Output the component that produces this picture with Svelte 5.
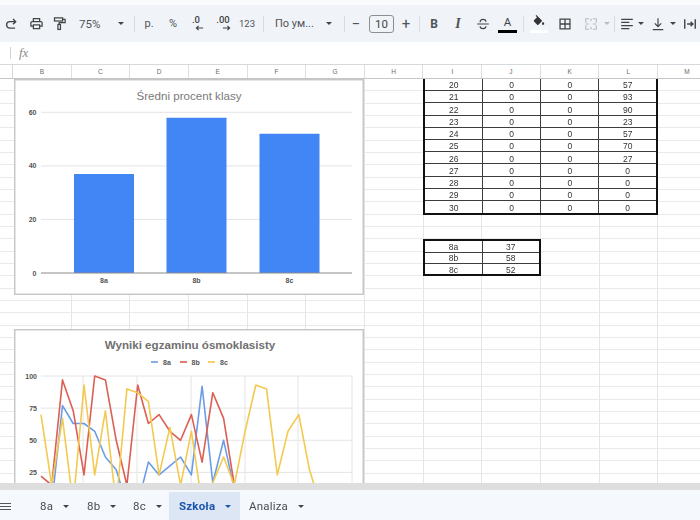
<script>
  const columns = ['B','C','D','E','F','G','H','I','J','K','L','M'];
  const table1 = [[20,0,0,57],[21,0,0,93],[22,0,0,90],[23,0,0,23],[24,0,0,57],[25,0,0,70],[26,0,0,27],[27,0,0,0],[28,0,0,0],[29,0,0,0],[30,0,0,0]];
  const table2 = [['8a',37],['8b',58],['8c',52]];
  const bars = [{l:'8a',x:74,v:37},{l:'8b',x:166.5,v:58},{l:'8c',x:259.5,v:52}];
  const barY = (v) => 273 - v * (273 - 112.3) / 60;
  const lineX = (i) => 41 + i * 10.74;
  const lineY = (v) => 504.5 - v * 1.285;
  const pts = (d) => d.map((v, i) => `${lineX(i).toFixed(1)},${lineY(v).toFixed(1)}`).join(' ');
  const blue = [10,0,77,63,63,57,37,27,0,0,33,23,30,37,23,92,17,50,12,0,0];
  const red = [22,15,97,73,23,100,97,50,15,93,63,70,57,50,70,33,87,67,15,0,0];
  const yellow = [70,15,67,0,93,23,73,0,90,87,80,23,60,15,57,0,17,37,15,57,93,90,23,57,70,27,0,0];
  const tabs = [{n:'8a',c:'ta'},{n:'8b',c:'tb'},{n:'8c',c:'tc8'},{n:'Szkoła',c:'active'},{n:'Analiza',c:'tz'}];
</script>

<div class="app">
  <div class="topline"></div>
  <div class="toolbar">
    <span class="i w22"><svg class="ic" viewBox="0 0 24 24"><path d="M19 19H10a5.500 5.500 0 0 1 0-11h10M15.500 3.500 20 8l-4.500 4.500" fill="none" stroke="#444" stroke-width="2.400"/></svg></span>
    <span class="i w28"><svg class="ic lg" viewBox="0 0 24 24"><path fill="#444" d="M19 8h-1V3H6v5H5c-1.660 0-3 1.340-3 3v6h4v4h12v-4h4v-6c0-1.660-1.340-3-3-3zM8 5h8v3H8V5zm8 14H8v-4h8v4zm4-4h-2v-2H6v2H4v-4c0-.550.450-1 1-1h14c.550 0 1 .450 1 1v4z"/></svg></span>
    <span class="i w18"><svg class="ic lg" viewBox="0 0 24 24"><g fill="none" stroke="#444" stroke-width="2"><rect x="4" y="3" width="13" height="5"/><path d="M17 5.500h4v5H11.500v3"/><rect x="9.500" y="13.500" width="4" height="8"/></g></svg></span>
    <span class="t zoom">75%</span>
    <span class="caret c18"></span>
    <span class="sep m4"></span>
    <span class="t w28">р.</span>
    <span class="t w20">%</span>
    <span class="i w26 dec"><span class="dect">.0</span><svg class="arrow" viewBox="0 0 10 6"><path d="M9 3H2M4 .8 1.500 3 4 5.200" fill="none" stroke="#444" stroke-width="1.200"/></svg></span>
    <span class="i w28 dec"><span class="dect">.00</span><svg class="arrow" viewBox="0 0 10 6"><path d="M1 3h7M6 .8 8.500 3 6 5.200" fill="none" stroke="#444" stroke-width="1.200"/></svg></span>
    <span class="t w20 small">123</span>
    <span class="sep m6"></span>
    <span class="t font">По ум...</span>
    <span class="caret c16"></span>
    <span class="sep m7"></span>
    <span class="t w22 op">−</span>
    <span class="size">10</span>
    <span class="t w24 op">+</span>
    <span class="sep m1"></span>
    <span class="t w28 bold">B</span>
    <span class="t w20 ital">I</span>
    <span class="i w30"><svg class="ic" viewBox="0 0 24 24"><path d="M2 12h20M7 9c0-3 2-5 5-5s5 1.500 5 4M7 16c0 2.500 2 4 5 4s5-1.500 5-4" fill="none" stroke="#444" stroke-width="2"/></svg></span>
    <span class="colora"><span>A</span><i></i></span>
    <span class="sep m6"></span>
    <span class="fill"><svg class="ic" viewBox="0 0 24 24"><path fill="#333" d="M16.560 8.940 7.620 0 6.210 1.410l2.380 2.380-5.150 5.150c-.590.590-.590 1.540 0 2.120l5.500 5.500c.290.290.680.440 1.060.440s.770-.150 1.060-.440l5.500-5.500c.590-.580.590-1.530 0-2.120zM19 11.500s-2 2.170-2 3.500c0 1.100.900 2 2 2s2-.900 2-2c0-1.330-2-3.500-2-3.500z"/></svg><i></i></span>
    <span class="i w34"><svg class="ic" viewBox="0 0 24 24"><path d="M3.500 3.500h17v17h-17zM12 3.500v17M3.500 12h17" fill="none" stroke="#444" stroke-width="2.200"/></svg></span>
    <span class="i w18"><svg class="ic" viewBox="0 0 24 24"><path d="M3 10V3h6M15 3h6v7M3 14v7h6M15 21h6v-7M3 12h6M15 12h6M12 3v4M12 17v4" fill="none" stroke="#b9bdc2" stroke-width="2"/></svg></span>
    <span class="caret c14 light"></span>
    <span class="sep"></span>
    <span class="i w20 m2"><svg class="ic" viewBox="0 0 24 24"><path d="M2 4h20M2 9.300h14M2 14.600h20M2 20h14" fill="none" stroke="#444" stroke-width="2.200"/></svg></span>
    <span class="caret c8"></span>
    <span class="i w22 m2"><svg class="ic" viewBox="0 0 24 24"><path d="M12 2v14M6.500 11l5.500 5.500 5.500-5.500M3 21.500h18" fill="none" stroke="#444" stroke-width="2"/></svg></span>
    <span class="caret c8"></span>
    <span class="i w26"><svg class="ic" viewBox="0 0 24 24"><path d="M3 4v16M21 4v16M7 12h10M13 8l4 4-4 4" fill="none" stroke="#444" stroke-width="2.400"/></svg></span>
  </div>

  <div class="formula">
    <span class="fsep"></span>
    <span class="fx">fx</span>
  </div>

  <div class="head">
    <div class="corner"></div>
    {#each columns as c}<div class="hcell">{c}</div>{/each}
  </div>

  <div class="sheet">
    <div class="cells">
      <table class="t1">
        <tbody>
          {#each table1 as r}
            <tr>{#each r as v}<td><span class="val">{v}</span></td>{/each}</tr>
          {/each}
        </tbody>
      </table>
      <table class="t2">
        <tbody>
          {#each table2 as r}
            <tr>{#each r as v}<td><span class="val">{v}</span></td>{/each}</tr>
          {/each}
        </tbody>
      </table>
    </div>

    <svg class="chart chart1" viewBox="14 79 350 216">
      <rect x="14.700" y="79.700" width="348.600" height="214.600" fill="#fff" stroke="#c6c6c6" stroke-width="1.500"/>
      <text class="title" x="189" y="100">Średni procent klasy</text>
      {#each [60,40,20] as v}
        <line x1="41" x2="352" y1={barY(v)} y2={barY(v)} stroke="#e4e4e4"/>
      {/each}
      {#each [60,40,20,0] as v}
        <text class="axis end" x="36.500" y={barY(v) + 2.500}>{v}</text>
      {/each}
      {#each bars as b}
        <rect x={b.x} y={barY(b.v)} width="60" height={273 - barY(b.v)} fill="#4285f4" rx="0.500"/>
        <text class="axis mid" x={b.x + 30} y="283">{b.l}</text>
      {/each}
      <line x1="41" x2="352" y1="273" y2="273" stroke="#8a8a8a"/>
    </svg>

    <svg class="chart chart2" viewBox="14 329 350 216">
      <rect x="14.700" y="329.700" width="348.600" height="214.600" fill="#fff" stroke="#c6c6c6" stroke-width="1.500"/>
      <text class="title strong" x="190" y="349">Wyniki egzaminu ósmoklasisty</text>
      <line x1="151" x2="158" y1="362" y2="362" stroke="#6a9de8" stroke-width="1.600"/>
      <text class="axis" x="163" y="364.500">8a</text>
      <line x1="180" x2="187" y1="362" y2="362" stroke="#db5a4e" stroke-width="1.600"/>
      <text class="axis" x="191.500" y="364.500">8b</text>
      <line x1="208" x2="215" y1="362" y2="362" stroke="#f4c542" stroke-width="1.600"/>
      <text class="axis" x="220" y="364.500">8c</text>
      {#each [100,75,50,25] as v}
        <line x1="41" x2="352" y1={lineY(v)} y2={lineY(v)} stroke="#e4e4e4"/>
        <text class="axis end" x="37" y={lineY(v) + 2.500}>{v}</text>
      {/each}
      {#each [83,137,191,245,298,352] as x}
        <line x1={x} x2={x} y1="376" y2="505" stroke="#e4e4e4"/>
      {/each}
      <polyline points={pts(blue)} class="ln" stroke="#6a9de8"/>
      <polyline points={pts(red)} class="ln" stroke="#dc5f54"/>
      <polyline points={pts(yellow)} class="ln" stroke="#f4c94f"/>
    </svg>
  </div>

  <div class="strip"></div>

  <div class="tabs">
    <span class="menu"><i></i><i></i><i></i></span>
    {#each tabs as t}
      <span class="tab {t.c}">{t.n}<span class="caret tc"></span></span>
    {/each}
  </div>
</div>

<style>
  :global(body) { margin: 0; background: #fff; }
  .app {
    width: 700px; height: 520px; overflow: hidden; display: flex; flex-direction: column;
    font-family: Roboto, "Liberation Sans", sans-serif; color: #444;
    filter: blur(0.5px);
  }
  .topline { height: 5px; background: #f9fbfd; flex: none; }
  .toolbar { height: 37px; background: #f0f4f9; display: flex; align-items: center; flex: none; overflow: hidden; }
  .i, .t { display: flex; align-items: center; justify-content: center; flex: none; }
  .t { font-size: 11px; color: #505357; }
  .w18 { width: 18px; } .w20 { width: 20px; } .w22 { width: 22px; } .w24 { width: 24px; }
  .w26 { width: 26px; } .w28 { width: 28px; } .w30 { width: 30px; } .w34 { width: 34px; }
  .m1 { margin-left: 1px; } .m2 { margin-left: 2px; } .m4 { margin-left: 4px; }
  .m6 { margin-left: 6px; } .m7 { margin-left: 7px; }
  .ic { width: 14px; height: 14px; }
  .ic.lg { width: 15px; height: 15px; }
  .zoom { width: 33px; padding-left: 11px; justify-content: flex-start; font-size: 11.500px; }
  .font { width: 46px; padding-left: 11px; justify-content: flex-start; font-size: 11px; white-space: nowrap; }
  .small { font-size: 9.500px; }
  .caret { display: flex; justify-content: center; align-items: center; flex: none; height: 10px; }
  .caret::after { content: ""; border-left: 3.500px solid transparent; border-right: 3.500px solid transparent; border-top: 3.500px solid #444; }
  .caret.light::after { border-top-color: #b9bdc2; }
  .c18 { width: 18px; } .c16 { width: 16px; } .c14 { width: 14px; } .c8 { width: 8px; }
  .sep { width: 1px; height: 16px; background: #d8dce1; flex: none; }
  .dec { position: relative; height: 20px; display: block; text-align: center; }
  .dect { display: block; font-size: 9.500px; font-weight: 500; line-height: 12px; color: #444; }
  .arrow { display: block; width: 9px; height: 6px; margin: -1px auto 0; transform: translateX(3px); }
  .op { font-size: 15px; }
  .size { width: 25px; height: 18px; margin-left: 2px; box-sizing: border-box; border: 1px solid #8b8f94; border-radius: 3px; display: flex; align-items: center; justify-content: center; font-size: 11.500px; flex: none; color: #444; }
  .bold { font-weight: 700; font-size: 12px; }
  .ital { font-family: "Liberation Serif", serif; font-style: italic; font-weight: 700; font-size: 14px; }
  .colora { width: 19px; flex: none; display: flex; flex-direction: column; align-items: center; font-size: 11.500px; line-height: 13px; margin-top: 2px; color: #444; }
  .colora i { display: block; width: 19px; height: 3px; background: #000; margin-top: 1px; }
  .fill { width: 18px; flex: none; margin-left: 6px; display: flex; flex-direction: column; align-items: center; }
  .fill i { display: block; width: 18px; height: 3px; background: #fff; margin-top: 1px; }
  .formula { height: 22px; background: #fff; display: flex; align-items: center; flex: none; }
  .fsep { width: 1px; height: 12px; background: #d0d3d6; margin-left: 10px; }
  .fx { font-family: "Liberation Serif", serif; font-style: italic; color: #8a8a8a; font-size: 13px; margin-left: 8px; }
  .head { height: 15px; display: grid; grid-template-columns: 13px repeat(12, 58.650px); flex: none; background: #fff; box-sizing: border-box; border-top: 1px solid #d6d8da; border-bottom: 1px solid #c4c6c8; }
  .corner { border-right: 1px solid #d6d8da; }
  .hcell { font-size: 6.500px; color: #6b6b6b; display: flex; align-items: center; justify-content: center; border-right: 1px solid #dcdee0; font-family: "Liberation Sans", sans-serif; }
  .sheet { position: relative; height: 404px; overflow: hidden; flex: none; }
  .cells {
    height: 100%; display: grid;
    grid-template-columns: 13px repeat(12, 58.650px);
    grid-template-rows: repeat(33, 12.330px);
    background-image:
      repeating-linear-gradient(to right, transparent 0 57.650px, #e4e5e6 57.650px 58.650px),
      repeating-linear-gradient(to bottom, transparent 0 11.330px, #e9eaeb 11.330px 12.330px);
    background-position: 13px 0, 0 0;
  }
  table { border-collapse: collapse; table-layout: fixed; width: 100%; height: 100%; background: #fff; font-family: "Liberation Sans", sans-serif; font-size: 8.500px; color: #333; }
  td { padding: 0; text-align: center; border: 1px solid #3d3d3d; line-height: 1; overflow: hidden; }
  .val { display: block; transform: translateY(0.500px); }
  .t1 { grid-column: 9 / 13; grid-row: 1 / 12; border: 2px solid #111; border-top: none; }
  .t1 tr:first-child td { border-top: none; }
  .t2 { grid-column: 9 / 11; grid-row: 14 / 17; border: 2px solid #111; }
  .chart { position: absolute; left: 14px; width: 350px; height: 216px; }
  .chart1 { top: 0; }
  .chart2 { top: 250px; }
  .title { font-family: "Liberation Sans", sans-serif; font-size: 11.600px; fill: #7a7a7a; text-anchor: middle; }
  .title.strong { font-weight: 700; fill: #707070; }
  .axis { font-family: "Liberation Sans", sans-serif; font-size: 7px; font-weight: 700; fill: #555; }
  .end { text-anchor: end; }
  .mid { text-anchor: middle; }
  .ln { fill: none; stroke-width: 1.600; stroke-linejoin: round; }
  .strip { height: 7px; background: #dedede; flex: none; }
  .tabs { height: 30px; background: #f5f8fd; display: flex; align-items: flex-end; flex: none; }
  .menu { width: 11px; margin-right: 25px; height: 28px; display: flex; flex-direction: column; justify-content: center; gap: 2px; flex: none; }
  .menu i { display: block; height: 1px; background: #555; }
  .tab { height: 28px; box-sizing: border-box; display: flex; align-items: center; font-size: 11.500px; letter-spacing: 0.200px; color: #4a4d50; padding-left: 4px; flex: none; overflow: hidden; }
  .ta { width: 47px; }
  .tb { width: 46px; }
  .tc8 { width: 40px; }
  .tz { width: 80px; padding-left: 9px; }
  .tc { width: 26px; height: 10px; }
  .active { width: 71px; background: #dde6f4; color: #1c56ab; font-weight: 700; padding-left: 10px; }
  .active .tc::after { border-top-color: #1c56ab; }
</style>
